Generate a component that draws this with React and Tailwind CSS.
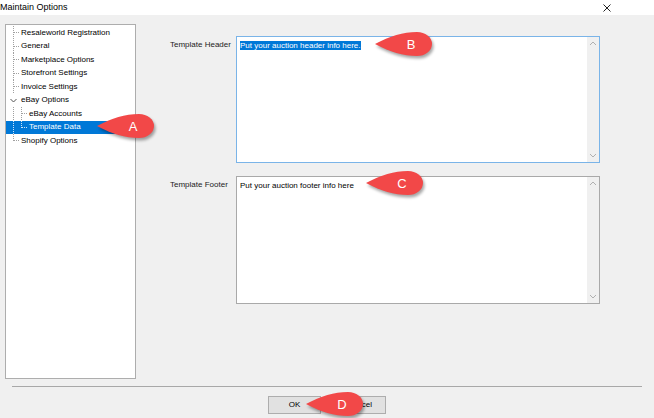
import React from "react";

const treeItems = [
    {label: "Resaleworld Registration", level: 0},
    {label: "General", level: 0},
    {label: "Marketplace Options", level: 0},
    {label: "Storefront Settings", level: 0},
    {label: "Invoice Settings", level: 0},
    {label: "eBay Options", level: 0, expanded: true},
    {label: "eBay Accounts", level: 1},
    {label: "Template Data", level: 1, last: true, selected: true},
    {label: "Shopify Options", level: 0, last: true},
];

function Connector({item}) {
    const c = item.selected ? "#cfe4f7" : "#a0a0a0";
    const inChildren = item.level === 1;
    return (
        <svg width="24" height="13.5" className="shrink-0">
            {/* main vertical line */}
            {!item.expanded && (
                <line x1="7.5" y1="0" x2="7.5" y2={item.level === 0 && item.last ? 7 : 13.5}
                      stroke={c} strokeDasharray="1 1"/>
            )}
            {item.level === 0 && !item.expanded && (
                <line x1="8" y1="6.5" x2="14" y2="6.5" stroke={c} strokeDasharray="1 1"/>
            )}
            {item.expanded && (
                <polyline points="4.5,5 7.5,8 10.5,5" fill="none" stroke="#555" strokeWidth="1"/>
            )}
            {inChildren && (
                <>
                    <line x1="15.5" y1="0" x2="15.5" y2={item.last ? 7 : 13.5} stroke={c} strokeDasharray="1 1"/>
                    <line x1="16" y1="6.5" x2="22" y2="6.5" stroke={c} strokeDasharray="1 1"/>
                </>
            )}
        </svg>
    );
}

function Callout({letter, className}) {
    const id = `sh-${letter}`;
    return (
        <svg width="64" height="30" className={`absolute ${className}`}>
            <defs>
                <filter id={id} x="-20%" y="-30%" width="140%" height="160%">
                    <feGaussianBlur stdDeviation="1.5"/>
                </filter>
            </defs>
            <path d="M1,12 C16,4 29,0 43,0 A15 12 0 0 1 43 24 C29 24 16 20 1 12 Z"
                  transform="translate(1.5 2.5)" fill="#000" opacity="0.35" filter={`url(#${id})`}/>
            <path d="M1,12 C16,4 29,0 43,0 A15 12 0 0 1 43 24 C29 24 16 20 1 12 Z" fill="#f24848"/>
            <text x="37" y="16.5" textAnchor="middle" fill="#fff" fontSize="13"
                  fontFamily="Liberation Sans, Arial, sans-serif">{letter}</text>
        </svg>
    );
}

function Chevron({up}) {
    return (
        <svg width="8" height="5">
            <polyline points={up ? "1,4 4,1 7,4" : "1,1 4,4 7,1"} fill="none" stroke="#b0b0b0" strokeWidth="1"/>
        </svg>
    );
}

function TextBox({focused, children}) {
    return (
        <div className={`flex w-[364px] bg-white border ${focused ? "border-[#7ab4e8] h-[127px]" : "border-[#a9a9a9] h-[128px]"}`}>
            <div className="flex-1 pl-[3px] pt-[3px] text-[8px] leading-[11px] text-black">{children}</div>
            <div className="w-[12px] bg-[#f0f0f0] flex flex-col items-center justify-between py-[4px]">
                <Chevron up/>
                <Chevron/>
            </div>
        </div>
    );
}

export default function App() {
    return (
        <div className="relative w-[654px] h-[418px] overflow-hidden bg-[#f0f0f0] font-['Liberation_Sans',Arial,sans-serif] text-black">
            {/* Title bar */}
            <div className="h-[15px] bg-white flex items-center justify-between pr-[43px]">
                <span className="text-[9px] leading-none">Maintain Options</span>
                <svg width="8" height="8">
                    <path d="M0.5 0.5 L7.5 7.5 M7.5 0.5 L0.5 7.5" stroke="#222" strokeWidth="1"/>
                </svg>
            </div>

            <div className="flex pl-[5px] pt-[9px]">
                {/* Tree */}
                <div className="w-[131px] h-[355px] bg-white border border-[#adadad] pt-[1px]">
                    {treeItems.map(item => (
                        <div key={item.label}
                             className={`flex items-center h-[13.5px] text-[8px] ${item.selected ? "bg-[#0078d7] text-white" : ""}`}>
                            <Connector item={item}/>
                            <span className={item.level === 0 ? "-ml-[9px]" : "-ml-[1px]"}>{item.label}</span>
                        </div>
                    ))}
                </div>

                {/* Right side */}
                <div className="ml-[34px] pt-[12px] flex flex-col gap-[13px]">
                    <div className="flex">
                        <div className="w-[66px] pt-[3px] text-[8px] leading-[11px] text-[#222]">Template Header</div>
                        <TextBox focused>
                            <span className="bg-[#0078d7] text-white">Put your auction header info here.</span>
                        </TextBox>
                    </div>
                    <div className="flex">
                        <div className="w-[66px] pt-[3px] text-[8px] leading-[11px] text-[#222]">Template Footer</div>
                        <TextBox>Put your auction footer info here</TextBox>
                    </div>
                </div>
            </div>

            <div className="mx-[12px] mt-[7px] h-px bg-[#a8a8a8]"/>

            <div className="flex justify-center gap-[12px] mt-[9px]">
                <button className="w-[53px] h-[18px] bg-[#e1e1e1] border border-[#adadad] text-[8px]">OK</button>
                <button className="w-[53px] h-[18px] bg-[#e1e1e1] border border-[#adadad] text-[8px]">Cancel</button>
            </div>

            <Callout letter="A" className="left-[96px] top-[114px]"/>
            <Callout letter="B" className="left-[374px] top-[32px]"/>
            <Callout letter="C" className="left-[365px] top-[171px]"/>
            <Callout letter="D" className="left-[305px] top-[392px]"/>
        </div>
    );
}
